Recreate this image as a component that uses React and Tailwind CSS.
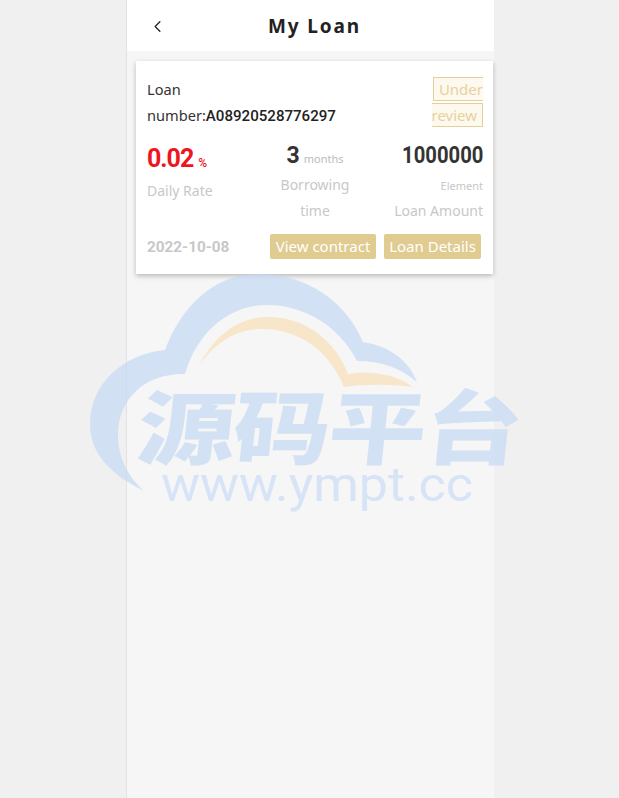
import React from "react";
import { ChevronLeft } from "lucide-react";

const sans = "font-['Noto_Sans','Open_Sans',sans-serif]";
const num = "font-['Roboto',sans-serif]";

function Watermark() {
  return (
    <svg
      className="absolute left-0 top-0 pointer-events-none"
      width="619"
      height="798"
      viewBox="0 0 619 798"
    >
      <g fillOpacity="0.7">
        <path
          d="M144 491 C108 473 90 452 90 424 C90 385 122 354 165 350 C182 305 215 274 258 274 C308 274 346 302 363 342 C390 346 409 361 417 382 C400 368 382 361 357 361 C340 327 305 305 267 305 C228 305 197 333 185 374 C146 373 118 398 118 435 C118 458 128 476 144 491 Z"
          fill="#c4d8f5"
        />
        <path
          d="M199 366 C214 336 238 317 268 317 C305 317 335 340 348 374 C376 370 398 376 413 387 C390 384 366 384 344 387 C330 352 300 329 262 329 C235 329 214 344 199 366 Z"
          fill="#f9dfb8"
        />
        <text
          transform="translate(135 458) skewX(-6) scale(1.22 1)"
          fontFamily="'Noto Sans CJK SC', sans-serif"
          fontWeight="900"
          fontSize="80"
          textLength="315"
          lengthAdjust="spacing"
          fill="#c4d8f5"
        >
          源码平台
        </text>
        <text
          x="161"
          y="501"
          fontFamily="'Roboto', sans-serif"
          fontWeight="400"
          fontSize="48"
          textLength="312"
          lengthAdjust="spacingAndGlyphs"
          fill="#cbdcf6"
        >
          www.ympt.cc
        </text>
      </g>
    </svg>
  );
}

export default function App() {
  return (
    <div className={`relative min-h-[798px] overflow-hidden bg-[#f0f0f0] ${sans}`}>
      <div className="ml-[126px] w-[368px] min-h-[798px] border-l border-[#e2e2e2] bg-[#f6f6f6]">
        {/* Header */}
        <div className="relative h-[51px] bg-white flex items-center justify-center">
          <ChevronLeft className="absolute left-[21px] top-[17px] text-[#222]" size={19} strokeWidth={1.6} />
          <h1 className="text-[19px] font-bold tracking-[1.9px] text-[#222] pl-[8px] pt-[2px]">My Loan</h1>
        </div>

        {/* Loan card */}
        <div className="mt-[10px] ml-[9px] h-[213px] w-[357px] bg-white pl-[11px] pr-[10px] pt-[15px] shadow-[0_2px_5px_rgba(0,0,0,0.25)]">
          <div className="flex justify-between text-[15px] leading-[26px]">
            <div className="w-[200px] text-[14.6px] text-[#333]">
              Loan number:<span className={`${num} font-medium text-[15.1px] text-[#222]`}>A08920528776297</span>
            </div>
            <div className="w-[52px] text-right">
              <span className="border border-[#e3cf98] bg-[#fdf9ef] text-[#e6d29c] py-[1px] px-[5px]">Under review</span>
            </div>
          </div>

          <div className="mt-[11px] grid grid-cols-3">
            <div>
              <div className={`${num} font-bold text-[25px] leading-[37px] text-[#f0141e] flex items-baseline gap-[5px]`}>
                <span className="inline-block tracking-[-1px]">0.02</span>
                <span className="text-[12px] font-medium leading-none">%</span>
              </div>
              <div className="text-[14px] leading-[26px] text-[#c8c8c8] mt-[1px]">Daily Rate</div>
            </div>
            <div className="text-center">
              <div className={`${num} font-bold text-[23px] leading-[31px] text-[#333] flex items-baseline justify-center gap-[4px]`}>
                3<span className={`${sans} font-normal text-[11px] text-[#bbb] leading-none`}>months</span>
              </div>
              <div className="mt-[1px] text-[14px] leading-[26px] text-[#c8c8c8] px-[10px]">Borrowing time</div>
            </div>
            <div className="text-right">
              <div className={`${num} font-bold text-[23px] leading-[31px] text-[#333]`}>
                <span className="inline-block origin-right scale-x-[0.88]">1000000</span>
              </div>
              <div className="text-[11px] leading-[25px] text-[#c8c8c8] mt-[2px]">Element</div>
              <div className="text-[14px] leading-[26px] text-[#c8c8c8]">Loan Amount</div>
            </div>
          </div>

          <div className="mt-[10px] flex items-center">
            <span className={`${num} pt-[2px] font-bold text-[15.3px] text-[#c8c8c8]`}>2022-10-08</span>
            <div className="ml-auto mr-[2px] flex gap-[8px]">
              <button className="h-[25px] px-[5px] w-[106px] rounded-[2px] bg-[#e0cb90] text-white text-[15px] leading-[25px]">View contract</button>
              <button className="h-[25px] px-[5px] w-[97px] rounded-[2px] bg-[#e0cb90] text-white text-[15px] leading-[25px]">Loan Details</button>
            </div>
          </div>
        </div>
      </div>
      <Watermark />
    </div>
  );
}
